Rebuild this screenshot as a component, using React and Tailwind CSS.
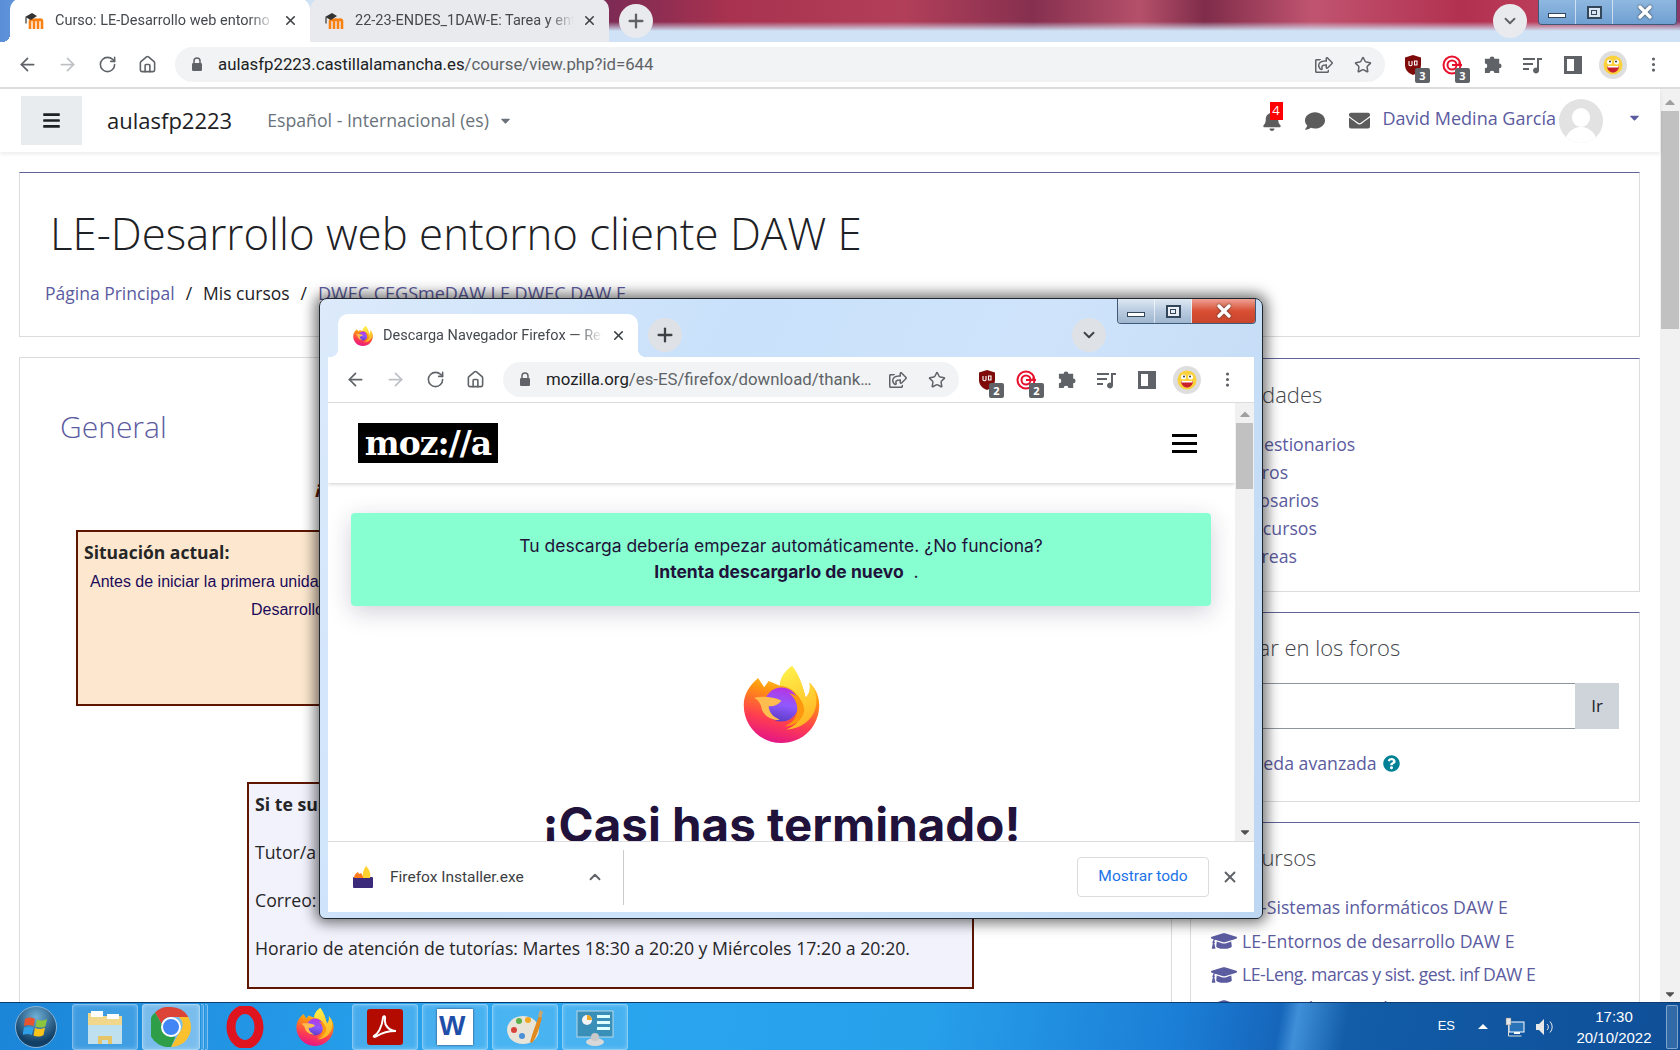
import { ArrowLeft, ArrowRight, RotateCw, Home, Star, X, Plus, ChevronDown, ChevronUp, EllipsisVertical } from 'lucide-react'
import { FaBars, FaBell, FaComment, FaEnvelope, FaGraduationCap, FaQuestionCircle, FaRegShareSquare, FaCaretDown, FaCaretUp } from 'react-icons/fa'

function MoodleFavicon() {
  return (
    <svg width="20" height="18" viewBox="0 0 20 18" className="shrink-0">
      <path d="M5 17V9.5c0-2.5 4-2.5 4 0V17M9 9.5c0-2.5 4-2.5 4 0V17M13 9.5c0-2.5 4-2.5 4 0V17" fill="none" stroke="#f98012" strokeWidth="2.6" />
      <path d="M0 5 7 1l5 3-6 4z" fill="#333" />
      <path d="M1 5.5v6" stroke="#333" strokeWidth="1.2" />
    </svg>
  )
}

function Firefox({ size = 20, id = 'a' }) {
  return (
    <svg width={size} height={size} viewBox="0 0 100 102" className="shrink-0">
      <defs>
        <linearGradient id={`ff-body-${id}`} x1="0.65" y1="0" x2="0.4" y2="1">
          <stop offset="0" stopColor="#fff44f" />
          <stop offset="0.35" stopColor="#ff980e" />
          <stop offset="0.72" stopColor="#ff3d50" />
          <stop offset="1" stopColor="#e31587" />
        </linearGradient>
        <linearGradient id={`ff-glob-${id}`} x1="0.6" y1="0" x2="0.4" y2="1">
          <stop offset="0" stopColor="#b833e1" />
          <stop offset="0.5" stopColor="#9059ff" />
          <stop offset="1" stopColor="#5b3cc4" />
        </linearGradient>
        <linearGradient id={`ff-flame-${id}`} x1="0.3" y1="0" x2="0.6" y2="1">
          <stop offset="0" stopColor="#fff04a" />
          <stop offset="1" stopColor="#ffb320" />
        </linearGradient>
      </defs>
      <path d="M19 16C7 26 0 38 0 52c0 28 22 50 50 50s50-22 50-50c0-11-4-22-13-30 2 10-1 16-5 20C78 25 72 10 64 0 55 6 48 16 48 26L33 20l-6 8z" fill={`url(#ff-body-${id})`} />
      <path d="M64 0C55 6 48 16 48 26c14 0 30 14 30 30 0 12-8 24-22 28 20 0 38-14 40-34 1-10-2-20-9-28 2 10-1 16-5 20C78 25 72 10 64 0z" fill={`url(#ff-flame-${id})`} />
      <circle cx="50" cy="51" r="22.5" fill={`url(#ff-glob-${id})`} />
      <path d="M14 42c10-2 24-2 36 4-5 6-12 8-17 7 0 8 6 15 15 18-10 2-20-4-24-13-1-8-4-12-10-16z" fill="#ffbd4f" />
      <path d="M60 36c12 2 21 12 20 24-2 12-14 20-26 20 10-4 17-12 17-22 0-9-4-17-11-22z" fill="#ff980e" />
    </svg>
  )
}

function Lock() {
  return (
    <svg width="12" height="15" viewBox="0 0 12 15" className="shrink-0">
      <path d="M3 6V4a3 3 0 0 1 6 0v2" fill="none" stroke="#5f6368" strokeWidth="1.5" />
      <rect x="1" y="6" width="10" height="8" rx="1.2" fill="#5f6368" />
    </svg>
  )
}

function UBlock() {
  return (
    <svg width="20" height="22" viewBox="0 0 20 22">
      <path d="M10 1l8 2.5V11c0 5-3.5 8.5-8 10-4.5-1.5-8-5-8-10V3.5z" fill="#7f0a0a" />
      <path d="M6 7v4a2 2 0 0 0 3 0V7M11.5 7h2.5v4h-2.5z" fill="none" stroke="#fff" strokeWidth="1.1" />
    </svg>
  )
}

function Target() {
  return (
    <svg width="22" height="22" viewBox="0 0 22 22" fill="none">
      <circle cx="10" cy="11" r="8.5" stroke="#e8112d" strokeWidth="2" />
      <circle cx="10" cy="11" r="4.5" stroke="#e8112d" strokeWidth="2" />
      <path d="M10 11h10" stroke="#e8112d" strokeWidth="2" />
      <path d="M16 8l4 3-3 1" fill="#e8112d" />
    </svg>
  )
}

function PuzzleIcon() {
  return (
    <svg width="20" height="20" viewBox="0 0 21 21" fill="#5f6368">
      <path d="M7 4a2.5 2.5 0 0 1 5 0h5v5a2.5 2.5 0 0 1 0 5v5h-5a2.5 2.5 0 0 0-5 0H2v-5a2.5 2.5 0 0 0 0-5V4z" />
    </svg>
  )
}

function MediaIcon() {
  return (
    <svg width="20" height="18" viewBox="0 0 20 18" fill="#5f6368">
      <rect x="0" y="2" width="12" height="2" />
      <rect x="0" y="7" width="10" height="2" />
      <rect x="0" y="12" width="6" height="2" />
      <path d="M14 2h5v2h-3v10.5a3 3 0 1 1-2-2.8z" />
    </svg>
  )
}

function SidePanelIcon() {
  return (
    <svg width="18" height="18" viewBox="0 0 18 18">
      <rect x="1.5" y="1.5" width="15" height="15" fill="none" stroke="#5f6368" strokeWidth="3" />
      <rect x="10" y="1" width="7" height="16" fill="#5f6368" />
    </svg>
  )
}

function ProfileEmoji() {
  return (
    <div className="flex h-7 w-7 items-center justify-center rounded-full bg-[#dedede]">
      <svg width="20" height="20" viewBox="0 0 20 20">
        <circle cx="10" cy="10" r="9.5" fill="#fbd13c" />
        <circle cx="6.5" cy="7" r="2.5" fill="#fff" />
        <circle cx="13.5" cy="7" r="2.5" fill="#fff" />
        <circle cx="7" cy="6.5" r="1" fill="#333" />
        <circle cx="13" cy="6.5" r="1" fill="#333" />
        <path d="M4 11h12c0 4-3 6.5-6 6.5S4 15 4 11z" fill="#c9202c" />
        <path d="M4.5 11h11v1.5h-11z" fill="#fff" />
      </svg>
    </div>
  )
}

function ExtBadge({ children }) {
  return (
    <span className="absolute right-[3px] bottom-[2px] flex h-[15px] w-[15px] items-center justify-center rounded-[2px] bg-[#5f6368] font-['Noto_Sans',sans-serif] text-[11px] leading-none font-bold text-white">
      {children}
    </span>
  )
}

function ToolSlot({ children }) {
  return <div className="relative flex h-10 w-10 shrink-0 items-center justify-center">{children}</div>
}

function ChromeToolbar({ url, path, count, shareGap = 'ml-2' }) {
  return (
    <div className="flex h-[45px] shrink-0 items-center bg-white pr-[7px] pl-[7px]">
      <ToolSlot><ArrowLeft size={21} color="#5f6368" /></ToolSlot>
      <ToolSlot><ArrowRight size={21} color="#bdc1c6" /></ToolSlot>
      <ToolSlot><RotateCw size={19} color="#5f6368" /></ToolSlot>
      <ToolSlot><Home size={19} color="#5f6368" /></ToolSlot>
      <div className="ml-2 flex h-[35px] min-w-0 flex-1 items-center rounded-full bg-[#f1f3f4] pr-[13px] pl-[16px]">
        <Lock />
        <div className="ml-[15px] min-w-0 flex-1 truncate pt-px font-['Roboto',sans-serif] text-[16.8px] text-[#5f6368]">
          <span className="text-[#202124]">{url}</span>{path}
        </div>
        <FaRegShareSquare size={18} color="#5f6368" className={`mr-[21px] shrink-0 ${shareGap}`} />
        <Star size={18} color="#5f6368" className="shrink-0" />
      </div>
      <div className="ml-2 flex items-center">
        <ToolSlot><UBlock /><ExtBadge>{count}</ExtBadge></ToolSlot>
        <ToolSlot><Target /><ExtBadge>{count}</ExtBadge></ToolSlot>
        <ToolSlot><PuzzleIcon /></ToolSlot>
        <ToolSlot><MediaIcon /></ToolSlot>
        <ToolSlot><SidePanelIcon /></ToolSlot>
        <ToolSlot><ProfileEmoji /></ToolSlot>
        <ToolSlot><EllipsisVertical size={19} color="#5f6368" /></ToolSlot>
      </div>
    </div>
  )
}

function ChromeTab({ icon, title, active, width = 'w-[300px]' }) {
  return (
    <div className={`relative flex h-[43px] ${width} shrink-0 items-center rounded-t-[10px] pr-[12px] pl-[15px] ${active ? 'bg-white' : 'bg-[#e8eaed]'}`}>
      {active && (
        <>
          <span className="absolute bottom-0 -left-2 h-2 w-2 bg-[radial-gradient(circle_at_0_0,transparent_8px,white_8px)]" />
          <span className="absolute -right-2 bottom-0 h-2 w-2 bg-[radial-gradient(circle_at_100%_0,transparent_8px,white_8px)]" />
        </>
      )}
      {icon}
      <div className="ml-[10px] min-w-0 flex-1 overflow-hidden font-['Roboto',sans-serif] text-[14.5px] whitespace-nowrap text-[#45494e] [mask-image:linear-gradient(to_right,black_88%,transparent)]">
        {title}
      </div>
      <X size={15} color="#3c4043" strokeWidth={2.5} className="ml-[8px] shrink-0" />
    </div>
  )
}

function RoundBtn({ className, children }) {
  return <div className={`flex h-[34px] w-[34px] shrink-0 items-center justify-center rounded-full ${className}`}>{children}</div>
}

function WinControls({ active, widths, className }) {
  return (
    <div className={`absolute top-0 flex h-[25px] overflow-hidden rounded-b-[4px] border border-t-0 border-[#3f5a78] ${className}`}>
      <div style={{ width: widths[0] }} className={`flex items-end justify-center border-r border-white/60 pb-[6px] ${active ? 'bg-[linear-gradient(#dfe8f2,#b9cbe0_50%,#9fb6cf)]' : 'bg-[linear-gradient(#8fb8e0,#6f9fd2)]'}`}>
        <span className="h-[5px] w-[18px] border border-[#34465a] bg-white" />
      </div>
      <div style={{ width: widths[1] }} className={`flex items-center justify-center border-r border-white/60 ${active ? 'bg-[linear-gradient(#dfe8f2,#b9cbe0_50%,#9fb6cf)]' : 'bg-[linear-gradient(#8fb8e0,#6f9fd2)]'}`}>
        <span className="flex h-[13px] w-[15px] items-center justify-center border-2 border-[#34465a] bg-white/70">
          <span className="h-[5px] w-[6px] border border-[#34465a]" />
        </span>
      </div>
      <div style={{ width: widths[2] }} className={`flex items-center justify-center ${active ? 'bg-[linear-gradient(#eea195,#d84f34_50%,#c8452c)]' : 'bg-[linear-gradient(#8fb8e0,#6f9fd2)]'}`}>
        <X size={20} color="#fff" strokeWidth={4} className="drop-shadow-[0_0_1px_#333]" />
      </div>
    </div>
  )
}

function BlockLink({ label }) {
  return (
    <a className="flex h-[28px] items-center text-[#5b5ba0]">
      <span className="w-[31px] shrink-0" />
      {label}
    </a>
  )
}

function Block({ title, className, children }) {
  return (
    <section className={`border border-t-[#5f6399] border-r-[#dcdcdc] border-b-[#dcdcdc] border-l-[#dcdcdc] bg-white px-5 ${className}`}>
      <h5 className="flex h-[30px] items-center text-[22px] font-light text-[#44464c]">{title}</h5>
      {children}
    </section>
  )
}

const courses = [
  { name: 'LE-Sistemas informáticos DAW E', cls: '' },
  { name: 'LE-Entornos de desarrollo DAW E', cls: '' },
  { name: 'LE-Leng. marcas y sist. gest. inf DAW E', cls: 'tracking-[-0.5px]' },
  { name: 'LE-Despliegue aplicaciones DAW E', cls: '' },
]

function MoodlePage() {
  return (
    <div className="flex min-h-0 flex-1 overflow-hidden bg-white font-['Open_Sans',sans-serif]">
      <div className="flex min-w-0 flex-1 flex-col">
        <header className="relative z-10 flex h-[63px] shrink-0 items-center bg-white pr-[18px] pl-[21px] shadow-[0_2px_4px_rgba(0,0,0,0.08)]">
          <div className="flex h-[49px] w-[61px] items-center justify-center bg-[#e9ecef]">
            <FaBars size={19} color="#1d2125" />
          </div>
          <div className="ml-[25px] text-[22px] text-[#1d2125]">aulasfp2223</div>
          <div className="ml-[35px] flex items-center text-[17.7px] text-[#6a737b]">
            Español - Internacional (es)
            <FaCaretDown size={15} className="ml-[9px]" />
          </div>
          <div className="relative ml-auto flex items-center">
            <div className="relative mr-[23px]">
              <FaBell size={20} color="#5c5c5c" />
              <span className="absolute -top-[9px] left-[8px] flex h-[18px] w-[13px] items-center justify-center bg-[#f00] text-[13px] text-white">4</span>
            </div>
            <FaComment size={20} color="#5c5c5c" className="mr-[24px]" />
            <FaEnvelope size={21} color="#5c5c5c" className="mr-[13px]" />
            <span className="-mt-1 text-[18px] text-[#5b5ba0]">David Medina García</span>
            <div className="relative ml-[3px] h-[44px] w-[44px] overflow-hidden rounded-full bg-[#e2e2e2]">
              <span className="absolute top-[9px] left-[13px] h-[19px] w-[18px] rounded-full bg-white" />
              <span className="absolute top-[28px] left-[6px] h-[24px] w-[32px] rounded-t-full bg-white" />
            </div>
            <FaCaretDown size={15} color="#5b5ba0" className="-mt-[7px] ml-[24px]" />
          </div>
        </header>

        <div className="min-h-0 flex-1 overflow-hidden pr-[20px] pl-[19px]">
          <div className="mt-[20px] h-[165px] border border-t-[#5f6399] border-r-[#dcdcdc] border-b-[#dcdcdc] border-l-[#dcdcdc] pt-[30px] pl-[30px]">
            <h1 className="text-[43.8px] leading-[60px] font-light text-[#1d2125]">LE-Desarrollo web entorno cliente DAW E</h1>
            <nav className="mt-[17px] -ml-[5px] flex h-[26px] items-center text-[17.5px] whitespace-nowrap text-[#1d2125]">
              <a className="text-[#5b5ba0]">Página Principal</a>
              <span className="mx-[11px]">/</span>
              <span>Mis cursos</span>
              <span className="mx-[11px]">/</span>
              <a className="text-[18px] text-[#5b5ba0]">DWEC CEGSmeDAW LE DWEC DAW E</a>
            </nav>
          </div>

          <div className="mt-[20px] flex items-start gap-[18px]">
            <main className="h-[700px] w-[1153px] shrink-0 border border-[#dcdcdc] pt-[51px] pl-[40px]">
              <h3 className="text-[30px] leading-[36px] font-light text-[#5b5ba0]">General</h3>
              <p className="mt-[29px] h-[26px] pl-[256px] text-[18px] font-bold text-[#5e1600] italic">¡Bienvenidos al módulo!</p>
              <div className="mt-[30px] ml-[16px] h-[176px] w-[1052px] border-2 border-[#5e1600] bg-[#fde8cf] px-[6px] pt-[7px]">
                <div className="text-[17.5px] leading-[26px] font-bold text-[#262626]">Situación actual:</div>
                <div className="mt-[3px] font-['Liberation_Sans',sans-serif] text-[16px] leading-[28px] whitespace-nowrap text-[#1a0a5a]">
                  <div className="pl-[6px]">Antes de iniciar la primera unidad de esta asignatura, consulta la guía del módulo y los contenidos del aula virtual</div>
                  <div className="pl-[167px]">Desarrollo web en entorno cliente</div>
                </div>
              </div>
              <div className="mt-[76px] ml-[187px] h-[207px] w-[727px] border-2 border-[#5e1600] bg-[#f2f2fd] px-[6px] pt-[7px] text-[17.7px] text-[#262626]">
                <div className="h-[48px] leading-[26px] font-bold">Si te surge cualquier duda:</div>
                <div className="h-[48px] leading-[26px]">Tutor/a del módulo: David Medina</div>
                <div className="h-[48px] leading-[26px]">Correo: david.medina@edu.jccm.es</div>
                <div className="leading-[26px] whitespace-nowrap">Horario de atención de tutorías: Martes 18:30 a 20:20 y Miércoles 17:20 a 20:20.</div>
              </div>
            </main>

            <aside className="mt-px flex w-[450px] shrink-0 flex-col gap-[20px] text-[17.7px]">
              <Block title="Actividades" className="h-[234px] pt-[20px]">
                <div className="mt-[21px]">
                  <BlockLink label="Cuestionarios" />
                  <BlockLink label="Foros" />
                  <BlockLink label="Glosarios" />
                  <BlockLink label="Recursos" />
                  <BlockLink label="Tareas" />
                </div>
              </Block>
              <Block title="Buscar en los foros" className="h-[190px] pt-[19px]">
                <div className="mt-[21px] flex h-[46px]">
                  <div className="flex-1 border border-r-0 border-[#8f959e]" />
                  <div className="flex w-[44px] items-center justify-center bg-[#ced4da] text-[17px] text-[#1d2125]">Ir</div>
                </div>
                <div className="mt-[21px] flex items-center text-[#5b5ba0]">
                  Búsqueda avanzada
                  <FaQuestionCircle size={17} color="#008196" className="ml-[6px]" />
                </div>
              </Block>
              <Block title="Mis cursos" className="h-[260px] pt-[19px]">
                <div className="mt-[19px] flex flex-col">
                  {courses.map(c => (
                    <a key={c.name} className={`flex h-[33.5px] items-center text-[#5b5ba0] ${c.cls}`}>
                      <span className="flex w-[31px] shrink-0"><FaGraduationCap size={26} color="#5b5ba0" /></span>
                      {c.name}
                    </a>
                  ))}
                </div>
              </Block>
            </aside>
          </div>
        </div>
      </div>

      <div className="flex w-[20px] shrink-0 flex-col items-center bg-[#f1f1f1]">
        <FaCaretUp size={14} color="#a0a0a0" className="mt-[5px] h-[16px]" />
        <div className="mt-[1px] h-[218px] w-[18px] bg-[#c1c1c1]" />
        <FaCaretDown size={14} color="#505050" className="mt-auto mb-[1px]" />
      </div>
    </div>
  )
}

function DownloadIcon() {
  return (
    <div className="relative h-[22px] w-[20px] shrink-0">
      <svg width="20" height="22" viewBox="0 0 20 22">
        <rect x="0" y="11" width="20" height="11" rx="1" fill="#3b2a7a" />
        <path d="M1 12c0-3 2-5 4-6l1 2 2-1 3 5z" fill="#ff7b1c" />
        <path d="M10 12c-1-5 1-9 3-12 3 3 5 7 4 12z" fill="#ffd22e" />
      </svg>
    </div>
  )
}

function FirefoxWindow() {
  return (
    <div className="absolute top-[298px] left-[319px] z-20 flex h-[621px] w-[944px] flex-col rounded-t-[8px] rounded-b-[6px] border border-[#20262e] bg-[linear-gradient(115deg,#dceafb_0%,#c9e1fb_35%,#cfe4fb_60%,#bdd6f2_100%)] px-[8px] pb-[6px] font-['Roboto',sans-serif] shadow-[0_0_14px_4px_rgba(0,0,0,0.55)]">
      <div className="relative flex h-[58px] shrink-0 items-end pl-[10px]">
        <ChromeTab active title="Descarga Navegador Firefox — Resultado" icon={<Firefox size={20} id="tab" />} />
        <RoundBtn className="mb-[5px] ml-[10px] bg-[#dee1e6]"><Plus size={22} color="#3c4043" strokeWidth={2.5} /></RoundBtn>
        <RoundBtn className="mb-[5px] ml-[390px] bg-[#dee1e6]"><ChevronDown size={18} color="#3c4043" strokeWidth={2.5} /></RoundBtn>
        <WinControls active widths={[37, 37, 63]} className="-right-[2px]" />
      </div>
      <ChromeToolbar url="mozilla.org" path="/es-ES/firefox/download/thanks/?s=direct" count={2} shareGap="ml-[15px]" />
      <div className="flex min-h-0 flex-1 overflow-hidden border-t border-[#dadce0] bg-white">
        <div className="min-w-0 flex-1 overflow-hidden">
          <div className="flex h-[80px] items-center justify-between pr-[38px] pl-[30px] shadow-[0_1px_4px_rgba(0,0,0,0.2)]">
            <div className="flex h-[40px] w-[140px] items-center justify-center bg-black font-['DejaVu_Serif',serif] text-[33px] leading-none font-bold tracking-[-1px] text-white">moz://a</div>
            <div className="flex w-[25px] flex-col gap-[5px]">
              <span className="h-[3px] bg-black" />
              <span className="h-[3px] bg-black" />
              <span className="h-[3px] bg-black" />
            </div>
          </div>
          <div className="mt-[30px] mr-[24px] ml-[23px] flex h-[93px] flex-col items-center justify-center rounded-[4px] bg-[#88ffd1] pb-[2px] font-['Inter',sans-serif] text-[17.5px] leading-[26px] text-[#20123a] shadow-[0_6px_24px_rgba(32,18,58,0.2)]">
            <div>Tu descarga debería empezar automáticamente. ¿No funciona?</div>
            <div className="pl-[11px]"><b className="font-bold">Intenta descargarlo de nuevo</b> &nbsp;.</div>
          </div>
          <div className="mt-[60px] flex justify-center"><Firefox size={77} id="big" /></div>
          <h1 className="mt-[52px] text-center font-['Inter',sans-serif] text-[47.5px] leading-[60px] font-bold whitespace-nowrap text-[#20123a]">¡Casi has terminado!</h1>
        </div>
        <div className="flex w-[19px] shrink-0 flex-col items-center bg-[#f1f1f1]">
          <FaCaretUp size={14} color="#a0a0a0" className="mt-[3px] h-[16px]" />
          <div className="mt-[1px] h-[66px] w-[17px] bg-[#c1c1c1]" />
          <FaCaretDown size={14} color="#505050" className="mt-auto mb-[2px]" />
        </div>
      </div>
      <div className="flex h-[71px] shrink-0 items-center border-t border-[#dadce0] bg-white pr-[15px] pl-[25px]">
        <DownloadIcon />
        <span className="ml-[17px] w-[196px] pt-px text-[15.5px] text-[#3c4043]">Firefox Installer.exe</span>
        <ChevronUp size={18} color="#5f6368" strokeWidth={2.5} />
        <span className="ml-[19px] h-[55px] w-px bg-[#c9cbce]" />
        <div className="ml-auto flex h-[40px] w-[132px] items-center justify-center rounded-[4px] border border-[#dadce0] text-[15.5px] text-[#1a73e8]">Mostrar todo</div>
        <X size={18} color="#5f6368" strokeWidth={2.5} className="ml-[12px]" />
      </div>
    </div>
  )
}

function TaskBtn({ plain, bright, width = 'w-[66px]', children }) {
  return (
    <div className={`flex h-[46px] ${width} shrink-0 items-center justify-center rounded-[3px] ${plain ? '' : 'border border-white/35 shadow-[inset_0_0_4px_rgba(255,255,255,0.3)]'} ${bright ? 'bg-white/40' : plain ? '' : 'bg-white/15'}`}>
      {children}
    </div>
  )
}

function ChromeLogo() {
  return (
    <svg width="40" height="40" viewBox="0 0 40 40">
      <path d="M20 0a20 20 0 0 1 17.3 10H20a10 10 0 0 0-9.5 7L4 5.5A20 20 0 0 1 20 0z" fill="#db4437" />
      <path d="M37.3 10A20 20 0 0 1 20 40l8.7-15a10 10 0 0 0-1-15z" fill="#fbc02d" />
      <path d="M4 5.5l8 14a10 10 0 0 0 12.5 10L20 40A20 20 0 0 1 4 5.500z" fill="#2e9e48" />
      <circle cx="20" cy="20" r="9" fill="#4285f4" stroke="#fff" strokeWidth="2" />
    </svg>
  )
}

function Taskbar() {
  return (
    <footer className="relative z-10 flex h-[48px] shrink-0 items-center border-t border-[#0c3c70] bg-[linear-gradient(100deg,#1b85d8_0%,#2aa7f0_30%,#27a0ea_55%,#1b7ed6_70%,#1666bb_76%,#3f8fd8_77%,#125ca8_80%,#0f4f98_100%)]">
      <div className="flex w-[72px] shrink-0 justify-center">
        <div className="flex h-[42px] w-[42px] items-center justify-center rounded-full border border-[#88b5d8] bg-[radial-gradient(circle_at_50%_25%,#6fb0d8,#123f66_70%)]">
          <svg width="26" height="24" viewBox="0 0 26 24">
            <path d="M2 4c3-2 6-2 10 0l-1.5 7C7 9.5 4 9.5 1 11z" fill="#e8542e" />
            <path d="M14 4.5c3 1.5 6 1.5 10-.5l-1.5 7c-3 2-6 2-10 .5z" fill="#8cc63f" />
            <path d="M1 12.5c3-1.5 6-1.5 9.5 0L9 20c-3-1.5-6-1.5-9.5 0z" fill="#2f9fe8" />
            <path d="M12 13c3 1.5 6 1.5 10-.5L20.5 20c-3 2-7 2-10 .5z" fill="#fcc419" />
          </svg>
        </div>
      </div>
      <div className="flex gap-[4px]">
        <TaskBtn>
          <svg width="40" height="36" viewBox="0 0 40 36">
            <path d="M3 4h12l3 3h19v26a2 2 0 0 1-2 2H5a2 2 0 0 1-2-2z" fill="#f0d78c" />
            <rect x="6" y="2" width="12" height="6" fill="#fff" />
            <rect x="22" y="5" width="12" height="5" fill="#fff" />
            <rect x="3" y="16" width="34" height="19" fill="#bfe0ee" />
            <path d="M13 35v-8h14v8h-4v-4h-6v4z" fill="#e6c468" />
          </svg>
        </TaskBtn>
        <div className="flex w-[66px] shrink-0 gap-[1px]">
          <TaskBtn bright width="w-[58px]"><ChromeLogo /></TaskBtn>
          <span className="h-[46px] w-[3px] rounded-r-[2px] border border-l-0 border-white/35 bg-white/15" />
          <span className="h-[46px] w-[3px] rounded-r-[2px] border border-l-0 border-white/35 bg-white/10" />
        </div>
        <TaskBtn plain>
          <svg width="38" height="42" viewBox="0 0 38 42">
            <ellipse cx="19" cy="21" rx="14" ry="17.5" fill="none" stroke="#e0141f" strokeWidth="9" />
          </svg>
        </TaskBtn>
        <TaskBtn plain><Firefox size={38} id="task" /></TaskBtn>
        <TaskBtn>
          <div className="flex h-[36px] w-[36px] items-center justify-center rounded-[3px] bg-[#b30b00]">
            <svg width="26" height="26" viewBox="0 0 26 26" fill="none">
              <path d="M2 22c4-2 8-9 9-18 .5-3 2.5-2 2 1-1 6 4 12 11 12-6 0-13 1-19 5-2 1.5-4 1-3 0z" stroke="#fff" strokeWidth="2" />
            </svg>
          </div>
        </TaskBtn>
        <TaskBtn>
          <div className="relative h-[36px] w-[36px] bg-white shadow-[0_0_2px_#335]">
            <span className="absolute top-[3px] left-[2px] font-['Liberation_Sans',sans-serif] text-[28px] leading-none font-bold text-[#1f4fa8]">W</span>
          </div>
        </TaskBtn>
        <TaskBtn>
          <svg width="40" height="38" viewBox="0 0 40 38">
            <ellipse cx="18" cy="22" rx="16" ry="14" fill="#e8e4d8" />
            <circle cx="9" cy="22" r="3" fill="#d9423a" />
            <circle cx="14" cy="13" r="3" fill="#5cb04c" />
            <circle cx="23" cy="12" r="3" fill="#f0a824" />
            <circle cx="17" cy="28" r="3" fill="#4a8fd8" />
            <path d="M25 34c2-8 6-18 9-26l3 1c-2 9-5 20-10 26z" fill="#e08a20" />
            <path d="M33 8l2-6 3 2-2 6z" fill="#c9a870" />
          </svg>
        </TaskBtn>
        <TaskBtn>
          <svg width="40" height="38" viewBox="0 0 40 38">
            <rect x="2" y="3" width="36" height="26" fill="#3a8fb8" stroke="#b8d8e8" />
            <circle cx="12" cy="12" r="5" fill="#f4f4f4" />
            <path d="M12 12V7a5 5 0 0 1 5 5z" fill="#f0a824" />
            <rect x="22" y="7" width="13" height="3" fill="#dff" />
            <rect x="22" y="13" width="13" height="3" fill="#dff" />
            <rect x="22" y="19" width="13" height="3" fill="#dff" />
            <ellipse cx="20" cy="34" rx="9" ry="4" fill="#d8d8d8" />
            <circle cx="20" cy="29" r="4" fill="#c8c8c8" />
          </svg>
        </TaskBtn>
      </div>
      <div className="ml-auto flex items-center text-white">
        <span className="-mt-[2px] font-['Liberation_Sans',sans-serif] text-[13px]">ES</span>
        <span className="mr-[17px] ml-[23px] h-0 w-0 border-r-[5px] border-b-[5px] border-l-[5px] border-r-transparent border-b-white border-l-transparent" />
        <svg width="20" height="20" viewBox="0 0 20 20" className="mr-[10px]">
          <rect x="4" y="5" width="15" height="10" fill="#2b73b8" stroke="#fff" />
          <rect x="9" y="15" width="6" height="2" fill="#fff" />
          <rect x="1" y="1" width="5" height="7" fill="#e8e8e8" stroke="#777" strokeWidth="0.5" />
          <path d="M3.5 8v11h13" stroke="#ddd" fill="none" />
        </svg>
        <svg width="20" height="20" viewBox="0 0 20 20" fill="none">
          <path d="M1 7h3l5-5v16l-5-5H1z" fill="#e8e8e8" />
          <path d="M12 7a4 4 0 0 1 0 6M15 4.5a8 8 0 0 1 0 11" stroke="#e8e8e8" strokeWidth="1" />
        </svg>
        <div className="ml-[16px] w-[86px] text-center font-['Liberation_Sans',sans-serif] text-[15px] leading-[21px]">
          <div>17:30</div>
          <div>20/10/2022</div>
        </div>
        <div className="ml-[9px] h-[44px] w-[12px] rounded-[2px] border border-white/40 bg-white/15" />
        <div className="w-[2px]" />
      </div>
    </footer>
  )
}

export default function App() {
  return (
    <div className="relative flex h-[1050px] w-[1680px] flex-col overflow-hidden bg-white">
      <div className="relative flex h-[42px] shrink-0 items-end bg-[linear-gradient(#cfe2f5,#d0e3f6)] pl-[10px]">
        <span className="absolute top-0 left-0 h-[42px] w-[300px] bg-[linear-gradient(90deg,#5a8fd8,#cfe2f5)]" />
        <span className="absolute top-0 right-0 left-[600px] h-[31px] bg-[linear-gradient(90deg,#7a2a55_0%,#a8324f_12%,#b23f5a_28%,#86304f_40%,#b5506a_50%,#7f2c4a_56%,#c05470_66%,#b23050_80%,#c0435f_90%,#8a3a6a_100%)] [mask-image:linear-gradient(black_70%,transparent)]" />
        <div className="relative flex items-end">
          <div className="flex">
            <ChromeTab active width="w-[300px]" title="Curso: LE-Desarrollo web entorno cliente DAW E" icon={<MoodleFavicon />} />
            <ChromeTab width="w-[299px]" title="22-23-ENDES_1DAW-E: Tarea y entrega" icon={<MoodleFavicon />} />
          </div>
          <RoundBtn className="mb-[4px] ml-[10px] bg-[#e8eaed]"><Plus size={22} color="#5f6368" strokeWidth={2.5} /></RoundBtn>
        </div>
        <RoundBtn className="relative mb-[4px] ml-[840px] bg-[#e8eaed]"><ChevronDown size={18} color="#5f6368" strokeWidth={2.5} /></RoundBtn>
        <WinControls widths={[37, 37, 63]} className="right-[3px]" />
      </div>
      <div className="border-b-2 border-[#dcdcdc]">
        <ChromeToolbar url="aulasfp2223.castillalamancha.es" path="/course/view.php?id=644" count={3} />
      </div>
      <MoodlePage />
      <Taskbar />
      <FirefoxWindow />
    </div>
  )
}
